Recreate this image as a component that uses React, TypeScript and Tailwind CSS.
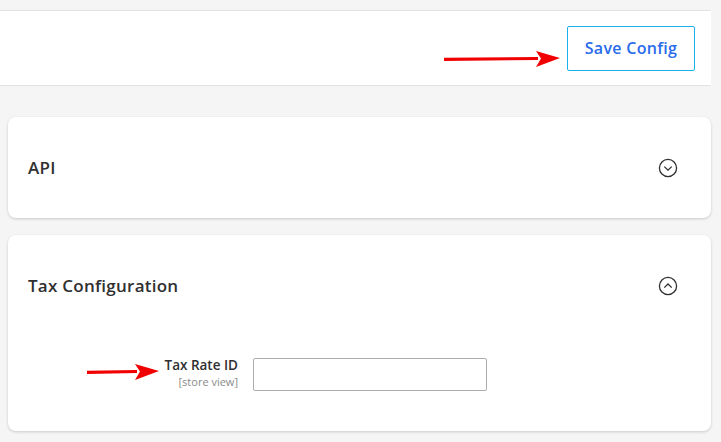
import React from "react";

const font = { fontFamily: '"Open Sans", "Liberation Sans", sans-serif' };

const Arrow = ({ width, className }: { width: number; className?: string }) => (
  <svg width={width} height={18} viewBox={`0 0 ${width} 18`} className={className}>
    <path d={`M0 7.8 L${width - 22} 7 L${width - 22} 10 L0 11 Z`} fill="#f00000" />
    <path d={`M${width - 24} 1 L${width} 8 L${width - 24} 17 L${width - 19} 8.5 Z`} fill="#f00000" />
  </svg>
);

const CircleChevron = ({ up }: { up?: boolean }) => (
  <svg width="20" height="20" viewBox="0 0 20 20" fill="none">
    <circle cx="10" cy="10" r="8.6" stroke="#303030" strokeWidth="1.3" />
    {up ? (
      <path d="M6.3 11.6 L10 8 L13.7 11.6" stroke="#303030" strokeWidth="1.3" />
    ) : (
      <path d="M6.3 8.6 L10 12.2 L13.7 8.6" stroke="#303030" strokeWidth="1.3" />
    )}
  </svg>
);

const Section = ({ title, open, children }: { title: string; open?: boolean; children?: React.ReactNode }) => (
  <div className="ml-2 rounded-lg bg-white shadow-[0_1px_3px_rgba(0,0,0,0.18)]">
    <div className="flex h-[101px] items-center justify-between pl-5 pr-[33px]">
      <h3 className="text-[17px] font-semibold tracking-[0.25px] text-[#303030]">{title}</h3>
      <CircleChevron up={open} />
    </div>
    {children}
  </div>
);

const App = () => {
  return (
    <div className="h-[442px] w-full overflow-hidden bg-[#f5f5f5]" style={font}>
      <div className="w-[711px] pt-[10px]">
        <div className="flex h-[76px] items-center justify-end border-y border-[#e3e3e3] bg-white pr-4">
          <Arrow width={116} className="mr-[7px] mt-[21px]" />
          <button className="h-[45px] w-[128px] rounded-[2px] border border-[#1ab0ea] text-[16px] font-semibold tracking-[0.3px] text-[#2a6bea]">
            Save Config
          </button>
        </div>
        <div className="mt-[31px] flex flex-col gap-[17px]">
          <Section title="API" />
          <Section title="Tax Configuration" open>
            <div className="flex items-start pb-10 pt-[22px]">
              <div className="flex w-[230px] items-center justify-end pt-[1px]">
                <Arrow width={72} className="mr-[6px] -mt-[1px]" />
                <div className="flex flex-col items-end leading-none">
                  <span className="text-[13.5px] font-semibold text-[#303030]">Tax Rate ID</span>
                  <span className="mt-[3px] text-[11px] text-[#8a8a8a]">[store view]</span>
                </div>
              </div>
              <input className="ml-[15px] h-[33px] w-[234px] rounded-[2px] border border-[#adadad] bg-white outline-none" />
            </div>
          </Section>
        </div>
      </div>
    </div>
  );
};

export default App;
